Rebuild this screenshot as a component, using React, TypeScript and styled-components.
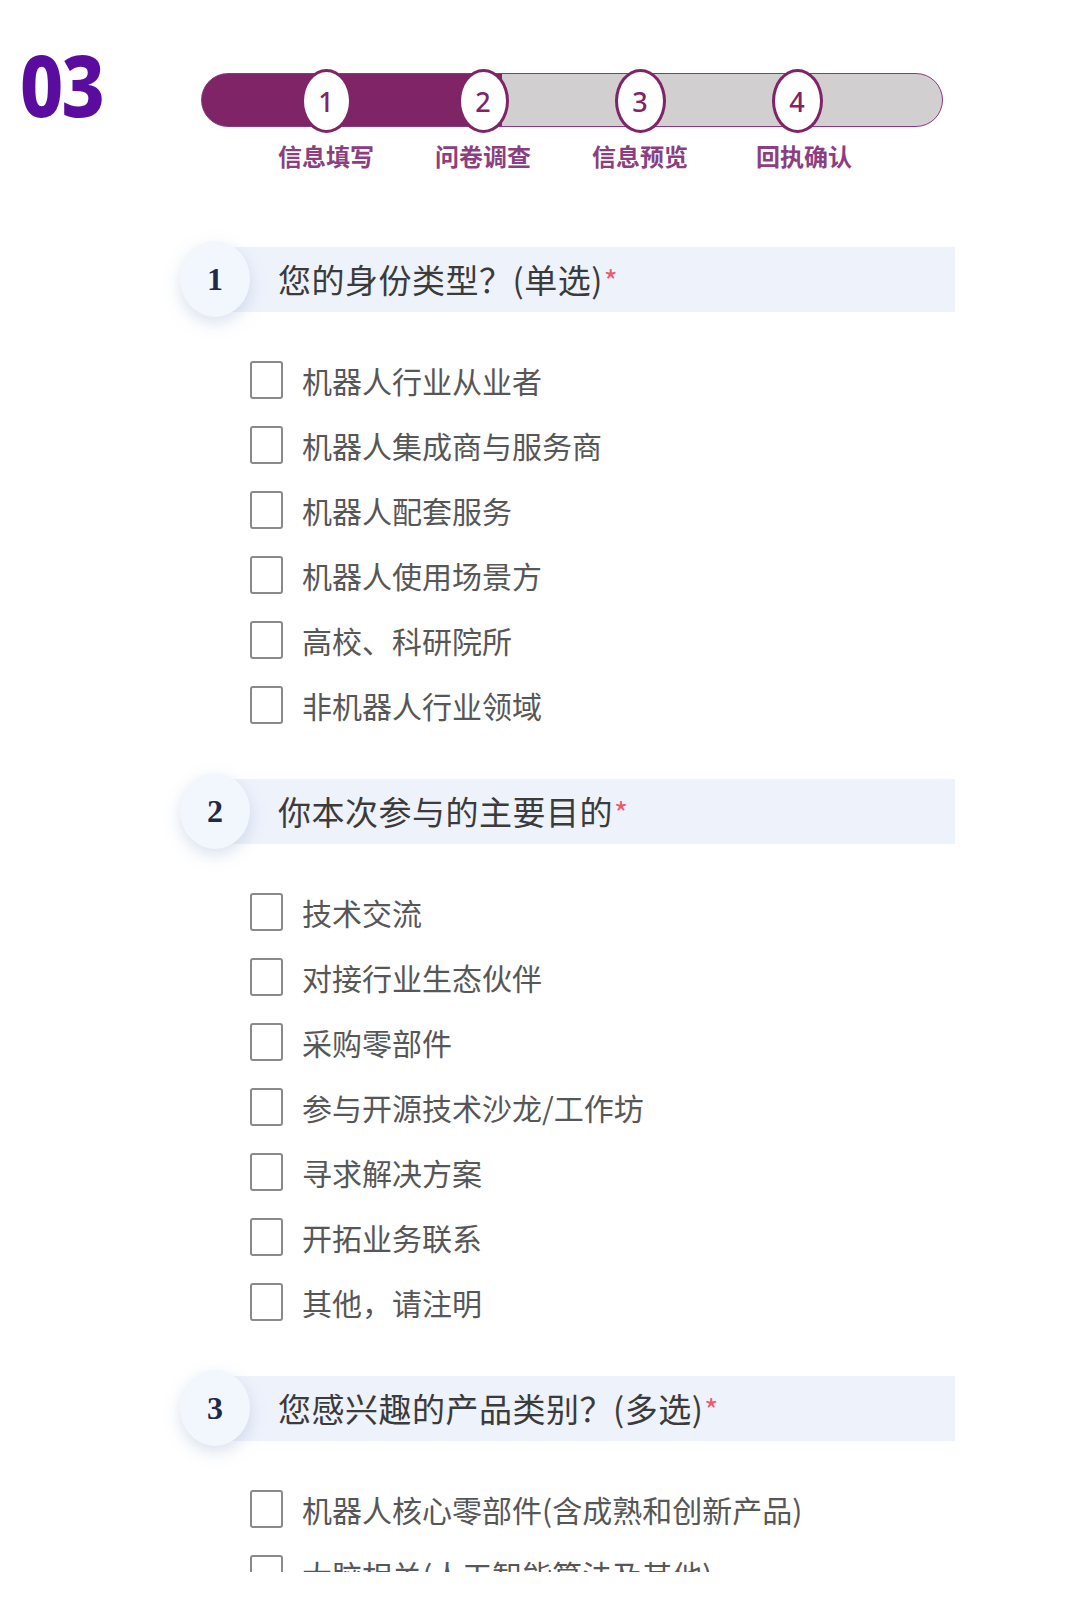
import * as React from 'react';
import styled, { createGlobalStyle } from 'styled-components';

const GlobalStyle = createGlobalStyle`
    html, body {
        margin: 0;
        padding: 0;
        background: #ffffff;
    }
    body {
        font-family: "Noto Sans CJK SC", "Noto Sans", sans-serif;
    }
`;

const steps = ['信息填写', '问卷调查', '信息预览', '回执确认'];

const questions = [
    {
        title: '您的身份类型？(单选)',
        options: [
            '机器人行业从业者',
            '机器人集成商与服务商',
            '机器人配套服务',
            '机器人使用场景方',
            '高校、科研院所',
            '非机器人行业领域'
        ]
    },
    {
        title: '你本次参与的主要目的',
        options: [
            '技术交流',
            '对接行业生态伙伴',
            '采购零部件',
            '参与开源技术沙龙/工作坊',
            '寻求解决方案',
            '开拓业务联系',
            '其他，请注明'
        ]
    },
    {
        title: '您感兴趣的产品类别？(多选)',
        options: [
            '机器人核心零部件(含成熟和创新产品)',
            '大脑相关(人工智能算法及其他)'
        ]
    }
];

// px of the track filled up to the current step
const FILLED = 300;

const App = () => (
    <>
        <GlobalStyle />
        <StyledPage>
            <StyledHeader>
                <StyledLogo>03</StyledLogo>
                <StyledStepper>
                    <StyledTrack filled={FILLED} />
                    <StyledSteps>
                        {steps.map((label, i) => (
                            <StyledStep key={label}>
                                <StyledStepCircle>{i + 1}</StyledStepCircle>
                                <StyledStepLabel shift={i === 3 ? 7 : 0}>{label}</StyledStepLabel>
                            </StyledStep>
                        ))}
                    </StyledSteps>
                </StyledStepper>
            </StyledHeader>

            <StyledQuestions>
                {questions.map((q, i) => (
                    <StyledQuestion key={q.title}>
                        <StyledQuestionHead>
                            <StyledNumber>{i + 1}</StyledNumber>
                            <StyledBand>
                                <StyledTitle>
                                    {q.title}
                                    <StyledRequired>*</StyledRequired>
                                </StyledTitle>
                            </StyledBand>
                        </StyledQuestionHead>
                        <StyledOptions>
                            {q.options.map(opt => (
                                <StyledOption key={opt}>
                                    <StyledCheckbox />
                                    <StyledOptionText>{opt}</StyledOptionText>
                                </StyledOption>
                            ))}
                        </StyledOptions>
                    </StyledQuestion>
                ))}
            </StyledQuestions>
        </StyledPage>
    </>
);

export default App;

const StyledPage = styled.div`
    width: 1080px;
    height: 1572px;
    overflow: hidden;
    background: #ffffff;
`;

const StyledHeader = styled.div`
    display: flex;
    align-items: flex-start;
    height: 170px;
    padding-left: 20px;
`;

const StyledLogo = styled.div`
    width: 181px;
    margin-top: 41px;
    font-family: "Noto Sans", sans-serif;
    font-weight: 800;
    font-size: 86px;
    line-height: 1;
    letter-spacing: -2px;
    color: #5a0c9e;
    transform: scaleX(0.87);
    transform-origin: left center;
`;

const StyledStepper = styled.div`
    position: relative;
    width: 742px;
    margin-top: 69px;
`;

const StyledTrack = styled.div<{ filled: number }>`
    position: absolute;
    top: 4px;
    left: 0;
    right: 0;
    height: 54px;
    box-sizing: border-box;
    border: 1.5px solid #8a3a7c;
    border-radius: 27px;
    background: linear-gradient(
        to right,
        #7f2467 ${p => p.filled}px,
        #d1cfd0 ${p => p.filled}px
    );
`;

const StyledSteps = styled.div`
    position: relative;
    display: flex;
    gap: 37px;
    padding-left: 65px;
`;

const StyledStep = styled.div`
    width: 120px;
    display: flex;
    flex-direction: column;
    align-items: center;
`;

const StyledStepCircle = styled.div`
    width: 51px;
    height: 64px;
    box-sizing: border-box;
    border: 3px solid #7f2467;
    border-radius: 50%;
    background: #ffffff;
    display: flex;
    align-items: center;
    justify-content: center;
    font-family: "Noto Sans", sans-serif;
    font-weight: 500;
    font-size: 27px;
    color: #7f2467;
`;

const StyledStepLabel = styled.div<{ shift: number }>`
    margin-top: 11px;
    margin-left: ${p => p.shift * 2}px;
    font-family: "Noto Sans CJK SC", sans-serif;
    font-weight: 700;
    font-size: 24px;
    line-height: 1;
    color: #8c3f80;
`;

const StyledQuestions = styled.div`
    margin-top: 71px;
    padding-left: 180px;
`;

const StyledQuestion = styled.section`
    margin-bottom: 36px;
`;

const StyledQuestionHead = styled.div`
    display: flex;
    align-items: center;
    width: 775px;
`;

const StyledNumber = styled.div`
    position: relative;
    z-index: 1;
    flex: none;
    width: 70px;
    height: 76px;
    border-radius: 50%;
    background: #f2f7fd;
    box-shadow: 0 6px 16px rgba(150, 170, 205, 0.35);
    display: flex;
    align-items: center;
    justify-content: center;
    font-family: "Liberation Serif", serif;
    font-weight: 700;
    font-size: 32px;
    color: #1e2a48;
`;

const StyledBand = styled.div`
    flex: 1;
    height: 65px;
    margin-left: -35px;
    padding-left: 63px;
    background: #eef2fb;
    display: flex;
    align-items: center;
`;

const StyledTitle = styled.div`
    font-family: "Noto Sans CJK SC", sans-serif;
    font-size: 33px;
    line-height: 1;
    letter-spacing: 0.5px;
    color: #3b3b3b;
`;

const StyledRequired = styled.span`
    color: #ee5a6c;
    font-size: 30px;
    vertical-align: 0;
    margin-left: 1px;
`;

const StyledOptions = styled.div`
    margin-top: 30px;
`;

const StyledOption = styled.div`
    display: flex;
    align-items: center;
    height: 65px;
    padding-left: 70px;
`;

const StyledCheckbox = styled.span`
    flex: none;
    width: 33px;
    height: 38px;
    box-sizing: border-box;
    border: 2px solid #8a8a8a;
    border-radius: 3px;
    background: #ffffff;
`;

const StyledOptionText = styled.span`
    margin-left: 19px;
    font-family: "Noto Sans CJK SC", sans-serif;
    font-size: 30px;
    line-height: 1;
    color: #575757;
`;
